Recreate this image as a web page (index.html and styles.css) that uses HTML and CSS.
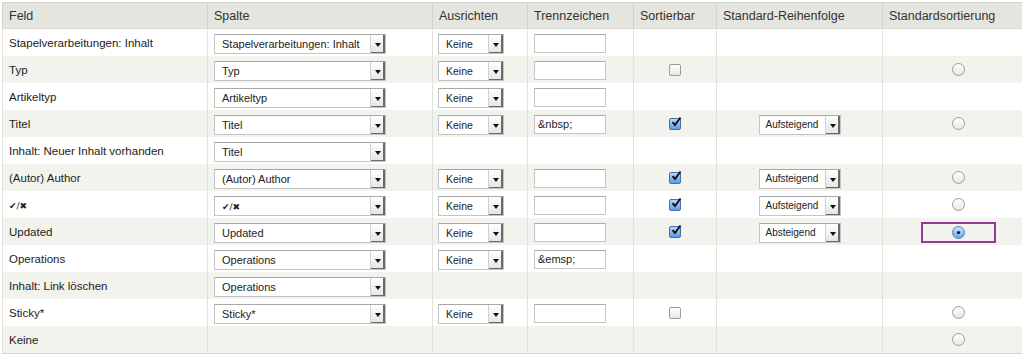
FILE: index.html
```html
<!DOCTYPE html>
<html lang="de">
<head>
    <meta charset="UTF-8">
    <meta name="viewport" content="width=device-width, initial-scale=1.0">
    <title>Tabellenfelder</title>
    <link rel="stylesheet" href="styles.css">
</head>
<body>
    <table class="fields">
        <colgroup>
            <col class="c-feld">
            <col class="c-spalte">
            <col class="c-ausrichten">
            <col class="c-trenn">
            <col class="c-sort">
            <col class="c-folge">
            <col class="c-standard">
        </colgroup>
        <thead>
            <tr>
                <th>Feld</th>
                <th>Spalte</th>
                <th>Ausrichten</th>
                <th>Trennzeichen</th>
                <th>Sortierbar</th>
                <th>Standard-Reihenfolge</th>
                <th>Standardsortierung</th>
            </tr>
        </thead>
        <tbody>
            <tr>
                <td>Stapelverarbeitungen: Inhalt</td>
                <td><div class="select sel-spalte"><span class="value">Stapelverarbeitungen: Inhalt</span><span class="arrow"></span></div></td>
                <td><div class="select sel-align"><span class="value">Keine</span><span class="arrow"></span></div></td>
                <td><div class="text-input"></div></td>
                <td class="center"></td>
                <td class="center"></td>
                <td class="radio-cell"></td>
            </tr>
            <tr>
                <td>Typ</td>
                <td><div class="select sel-spalte"><span class="value">Typ</span><span class="arrow"></span></div></td>
                <td><div class="select sel-align"><span class="value">Keine</span><span class="arrow"></span></div></td>
                <td><div class="text-input"></div></td>
                <td class="center"><span class="checkbox"></span></td>
                <td class="center"></td>
                <td class="radio-cell"><span class="radio"></span></td>
            </tr>
            <tr>
                <td>Artikeltyp</td>
                <td><div class="select sel-spalte"><span class="value">Artikeltyp</span><span class="arrow"></span></div></td>
                <td><div class="select sel-align"><span class="value">Keine</span><span class="arrow"></span></div></td>
                <td><div class="text-input"></div></td>
                <td class="center"></td>
                <td class="center"></td>
                <td class="radio-cell"></td>
            </tr>
            <tr>
                <td>Titel</td>
                <td><div class="select sel-spalte"><span class="value">Titel</span><span class="arrow"></span></div></td>
                <td><div class="select sel-align"><span class="value">Keine</span><span class="arrow"></span></div></td>
                <td><div class="text-input">&amp;nbsp;</div></td>
                <td class="center"><span class="checkbox checked"><svg viewBox="0 0 12 12" width="12" height="12"><path d="M2.5 6.2 L5 9 L10.5 1.5" fill="none" stroke="#111" stroke-width="2"/></svg></span></td>
                <td class="center"><div class="select sel-order"><span class="value">Aufsteigend</span><span class="arrow"></span></div></td>
                <td class="radio-cell"><span class="radio"></span></td>
            </tr>
            <tr>
                <td>Inhalt: Neuer Inhalt vorhanden</td>
                <td><div class="select sel-spalte"><span class="value">Titel</span><span class="arrow"></span></div></td>
                <td></td>
                <td></td>
                <td class="center"></td>
                <td class="center"></td>
                <td class="radio-cell"></td>
            </tr>
            <tr>
                <td>(Autor) Author</td>
                <td><div class="select sel-spalte"><span class="value">(Autor) Author</span><span class="arrow"></span></div></td>
                <td><div class="select sel-align"><span class="value">Keine</span><span class="arrow"></span></div></td>
                <td><div class="text-input"></div></td>
                <td class="center"><span class="checkbox checked"><svg viewBox="0 0 12 12" width="12" height="12"><path d="M2.5 6.2 L5 9 L10.5 1.5" fill="none" stroke="#111" stroke-width="2"/></svg></span></td>
                <td class="center"><div class="select sel-order"><span class="value">Aufsteigend</span><span class="arrow"></span></div></td>
                <td class="radio-cell"><span class="radio"></span></td>
            </tr>
            <tr>
                <td><span class="marks">✔/✖</span></td>
                <td><div class="select sel-spalte"><span class="value"><span class="marks">✔/✖</span></span><span class="arrow"></span></div></td>
                <td><div class="select sel-align"><span class="value">Keine</span><span class="arrow"></span></div></td>
                <td><div class="text-input"></div></td>
                <td class="center"><span class="checkbox checked"><svg viewBox="0 0 12 12" width="12" height="12"><path d="M2.5 6.2 L5 9 L10.5 1.5" fill="none" stroke="#111" stroke-width="2"/></svg></span></td>
                <td class="center"><div class="select sel-order"><span class="value">Aufsteigend</span><span class="arrow"></span></div></td>
                <td class="radio-cell"><span class="radio"></span></td>
            </tr>
            <tr>
                <td>Updated</td>
                <td><div class="select sel-spalte"><span class="value">Updated</span><span class="arrow"></span></div></td>
                <td><div class="select sel-align"><span class="value">Keine</span><span class="arrow"></span></div></td>
                <td><div class="text-input"></div></td>
                <td class="center"><span class="checkbox checked"><svg viewBox="0 0 12 12" width="12" height="12"><path d="M2.5 6.2 L5 9 L10.5 1.5" fill="none" stroke="#111" stroke-width="2"/></svg></span></td>
                <td class="center"><div class="select sel-order"><span class="value">Absteigend</span><span class="arrow"></span></div></td>
                <td class="radio-cell"><span class="highlight"><span class="radio checked"></span></span></td>
            </tr>
            <tr>
                <td>Operations</td>
                <td><div class="select sel-spalte"><span class="value">Operations</span><span class="arrow"></span></div></td>
                <td><div class="select sel-align"><span class="value">Keine</span><span class="arrow"></span></div></td>
                <td><div class="text-input">&amp;emsp;</div></td>
                <td class="center"></td>
                <td class="center"></td>
                <td class="radio-cell"></td>
            </tr>
            <tr>
                <td>Inhalt: Link löschen</td>
                <td><div class="select sel-spalte"><span class="value">Operations</span><span class="arrow"></span></div></td>
                <td></td>
                <td></td>
                <td class="center"></td>
                <td class="center"></td>
                <td class="radio-cell"></td>
            </tr>
            <tr>
                <td>Sticky*</td>
                <td><div class="select sel-spalte"><span class="value">Sticky*</span><span class="arrow"></span></div></td>
                <td><div class="select sel-align"><span class="value">Keine</span><span class="arrow"></span></div></td>
                <td><div class="text-input"></div></td>
                <td class="center"><span class="checkbox"></span></td>
                <td class="center"></td>
                <td class="radio-cell"><span class="radio"></span></td>
            </tr>
            <tr>
                <td>Keine</td>
                <td></td>
                <td></td>
                <td></td>
                <td class="center"></td>
                <td class="center"></td>
                <td class="radio-cell"><span class="radio"></span></td>
            </tr>
        </tbody>
    </table>
</body>
</html>
```
FILE: styles.css
```css
body {
    margin: 2px;
    background-color: white;
    font-family: "Liberation Sans", Arial, sans-serif;
    color: #222;
}
.fields {
    width: 1020px;
    table-layout: fixed;
    border-collapse: collapse;
    border: 1px solid #d6d6d1;
    font-size: 11.5px;
}
.c-feld { width: 205px; }
.c-spalte { width: 225px; }
.c-ausrichten { width: 95px; }
.c-trenn { width: 106px; }
.c-sort { width: 83px; }
.c-folge { width: 166px; }
.c-standard { width: 140px; }

.fields th {
    height: 25px;
    padding: 0 6px;
    background-color: #e5e5e0;
    border-left: 1px solid #d3d3ce;
    border-bottom: 1px solid #dcdcd7;
    text-align: left;
    font-weight: normal;
    font-size: 12.5px;
    color: #333;
}
.fields td {
    height: 27px;
    padding: 0 6px;
    border-left: 1px solid #e2e2dd;
    white-space: nowrap;
    vertical-align: middle;
}
.fields tbody tr:nth-child(even) td {
    background-color: #f3f3ee;
}
.fields td.center {
    text-align: center;
}
.fields td.radio-cell {
    text-align: center;
    padding-left: 18px;
}

.marks {
    font-size: 9px;
    font-family: "DejaVu Sans", sans-serif;
}

/* fake select boxes */
.select {
    display: inline-flex;
    align-items: stretch;
    height: 20px;
    margin-top: 2px;
    box-sizing: border-box;
    border: 1px solid #c4c4c4;
    border-top-color: #a8a8a8;
    background-color: white;
    font-size: 11px;
    color: #222;
    vertical-align: middle;
    text-align: left;
}
.select .value {
    flex: 1;
    padding-left: 7px;
    line-height: 18px;
    overflow: hidden;
}
.select .arrow {
    width: 14px;
    position: relative;
    border-left: 1px solid #d0d0d0;
    background: linear-gradient(#ffffff, #e4e4e4);
    box-shadow: inset -2px -1px 0 #6a6a6a;
}
.select .arrow::after {
    content: "";
    position: absolute;
    left: 4px;
    top: 8px;
    border-left: 3px solid transparent;
    border-right: 3px solid transparent;
    border-top: 4px solid #111;
}
.sel-spalte { width: 172px; }
.sel-align { width: 66px; margin-left: -1px; font-size: 10.5px; }
.sel-order { width: 82px; font-size: 10px; }
.sel-order .value { padding-left: 6px; }

.text-input {
    width: 72px;
    height: 19px;
    margin-top: 2px;
    box-sizing: border-box;
    border: 1px solid #c6c6c6;
    border-top-color: #aaa;
    background-color: white;
    font-size: 11px;
    line-height: 17px;
    padding-left: 3px;
}

.checkbox {
    display: inline-block;
    width: 10px;
    height: 10px;
    border: 1px solid #9a9a9a;
    border-radius: 2px;
    background: linear-gradient(#ffffff, #e8e8e8);
    vertical-align: middle;
    position: relative;
}
.checkbox.checked {
    border-color: #4a6fa8;
    background: linear-gradient(#b9d6f8, #5b9be6);
}
.checkbox svg {
    position: absolute;
    left: 0;
    top: -3px;
}

.radio {
    display: inline-block;
    width: 11px;
    height: 11px;
    border: 1px solid #9c9c9c;
    border-radius: 50%;
    background: linear-gradient(#ffffff, #e6e6e6);
    vertical-align: middle;
    position: relative;
}
.radio.checked {
    border-color: #5a7fb0;
    background: linear-gradient(#c9e1fb, #6aa8ea);
}
.radio.checked::after {
    content: "";
    position: absolute;
    left: 4px;
    top: 4px;
    width: 3px;
    height: 3px;
    border-radius: 50%;
    background-color: #111;
}

.highlight {
    display: inline-flex;
    align-items: center;
    justify-content: center;
    width: 75px;
    height: 21px;
    box-sizing: border-box;
    border: 2px solid #8f3b98;
    margin-top: 2px;
}
```
